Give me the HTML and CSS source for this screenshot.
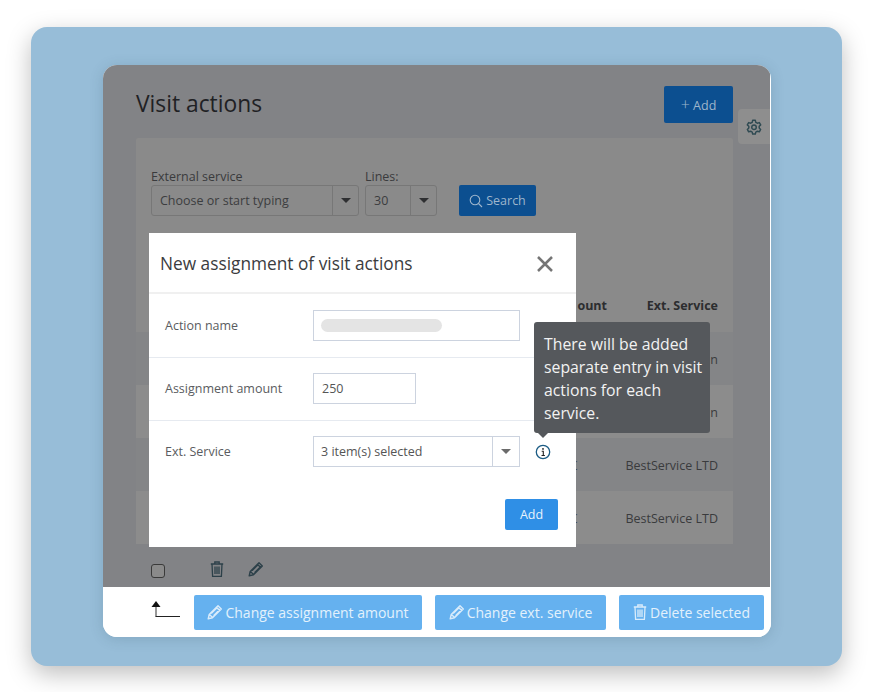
FILE: index.html
```html
<!DOCTYPE html>
<html lang="en">
<head>
<meta charset="utf-8">
<title>Visit actions</title>
<link rel="stylesheet" href="styles.css">
</head>
<body>
<div class="card">
  <div class="window">
    <div class="page">
      <div class="head">
        <h1 class="title">Visit actions</h1>
        <button class="btn-dim add-top"><span class="plus">+</span> Add</button>
      </div>
      <div class="gear">
        <svg width="16" height="16" viewBox="0 0 24 24" fill="none" stroke="#2f4a52" stroke-width="2.200" stroke-linejoin="round"><path d="M10 2h4l.7 3 2.300 1.300 3-.9 2 3.500-2.200 2.100v2.600L22 15.700l-2 3.500-3-.9-2.300 1.300L14 22.600h-4l-.7-3L7 18.300l-3 .9-2-3.500 2.200-2.100V11L2 8.900l2-3.500 3 .9L9.300 5z"/><circle cx="12" cy="12.300" r="3.400"/></svg>
      </div>
      <div class="panel">
        <div class="filters">
          <div class="field">
            <label class="flabel">External service</label>
            <div class="fselect wide"><span class="ftext">Choose or start typing</span><span class="fcaret"><i class="caret dim"></i></span></div>
          </div>
          <div class="field">
            <label class="flabel">Lines:</label>
            <div class="fselect narrow"><span class="ftext">30</span><span class="fcaret"><i class="caret dim"></i></span></div>
          </div>
          <button class="btn-dim search">
            <svg width="14" height="14" viewBox="0 0 14 14" fill="none" stroke="#9fb6cc" stroke-width="1.100"><circle cx="6" cy="6" r="4.800"/><path d="M9.500 9.500L13 13"/></svg>
            Search
          </button>
        </div>
        <div class="thead"><span class="th-amount">ount</span><span class="th-service">Ext. Service</span></div>
        <div class="row"><span class="cell">n</span></div>
        <div class="row stripe"><span class="cell">n</span></div>
        <div class="row"><span class="amt">€</span><span class="cell">BestService LTD</span></div>
        <div class="row stripe"><span class="amt">€</span><span class="cell">BestService LTD</span></div>
      </div>
      <div class="tools">
        <span class="check"></span>
        <svg class="trash" width="14" height="16" viewBox="0 0 14 16" fill="none" stroke="#2c4049" stroke-width="1.300"><path d="M.8 3h12.400M4.800 3V1h4.400v2M2 3l.6 12.300h8.800L12 3M5 5.500v7.500M7 5.500v7.500M9 5.500v7.500"/></svg>
        <svg class="pen" width="16" height="16" viewBox="0 0 16 16" fill="none" stroke="#2c4049" stroke-width="1.400" stroke-linejoin="round"><path d="M1.200 14.800l1-4.300L11 1.700l3.300 3.300-8.800 8.800zM2.500 10.500l3 3M9.400 3.300l3.300 3.300M4.200 9.500l6.500-6.500M6.500 11.800L13 5.300"/></svg>
      </div>
    </div>
    <div class="actions">
      <svg class="corner" width="30" height="16" viewBox="0 0 30 16" fill="none"><path d="M5 15.500V4" stroke="#555" stroke-width="1.200"/><path d="M4.500 15.500H29" stroke="#222" stroke-width="1"/><path d="M.5 6L5 0l4.500 6z" fill="#111"/></svg>
      <button class="btn-light w1">
        <svg width="16" height="16" viewBox="0 0 16 16" fill="none" stroke="#d9ecfb" stroke-width="1.400" stroke-linejoin="round"><path d="M1.200 14.800l1-4.300L11 1.700l3.300 3.300-8.800 8.800zM2.500 10.500l3 3M9.400 3.300l3.300 3.300M4.200 9.500l6.500-6.500M6.500 11.800L13 5.300"/></svg>
        Change assignment amount
      </button>
      <button class="btn-light w2">
        <svg width="16" height="16" viewBox="0 0 16 16" fill="none" stroke="#d9ecfb" stroke-width="1.400" stroke-linejoin="round"><path d="M1.200 14.800l1-4.300L11 1.700l3.300 3.300-8.800 8.800zM2.500 10.500l3 3M9.400 3.300l3.300 3.300M4.200 9.500l6.500-6.500M6.500 11.800L13 5.300"/></svg>
        Change ext. service
      </button>
      <button class="btn-light w3">
        <svg width="14" height="16" viewBox="0 0 14 16" fill="none" stroke="#d9ecfb" stroke-width="1.300"><path d="M.8 3h12.400M4.800 3V1h4.400v2M2 3l.6 12.300h8.800L12 3M5 5.500v7.500M7 5.500v7.500M9 5.500v7.500"/></svg>
        Delete selected
      </button>
    </div>
    <div class="modal">
      <div class="modal-head">
        <span class="modal-title">New assignment of visit actions</span>
        <svg class="close" width="18" height="18" viewBox="0 0 18 18" stroke="#757575" stroke-width="2.500"><path d="M2 2l14 14M16 2L2 16"/></svg>
      </div>
      <div class="mrow">
        <span class="mlabel">Action name</span>
        <div class="minput long"><span class="skeleton"></span></div>
      </div>
      <div class="mrow">
        <span class="mlabel">Assignment amount</span>
        <div class="minput short">250</div>
      </div>
      <div class="mrow last">
        <span class="mlabel">Ext. Service</span>
        <div class="minput long sel"><span class="seltext">3 item(s) selected</span><span class="selcaret"><i class="caret"></i></span></div>
        <svg class="info" width="16" height="16" viewBox="0 0 16 16" fill="none"><circle cx="8" cy="8" r="6.700" stroke="#1c5c84" stroke-width="1.300"/><path d="M6.700 7.200H8.300V11.500M6.500 11.500h3.400" stroke="#222" stroke-width="1.100"/><circle cx="8" cy="4.900" r=".9" fill="#222"/></svg>
      </div>
      <div class="mfoot"><button class="madd">Add</button></div>
    </div>
    <div class="tooltip">There will be added separate entry in visit actions for each service.</div>
  </div>
</div>
</body>
</html>
```
FILE: styles.css
```css
* { box-sizing: border-box; }
html, body { margin: 0; padding: 0; background: #fff; }
body { width: 873px; height: 692px; padding: 27px 31px 26px; font-family: "Open Sans", sans-serif; overflow: hidden; }
button { font-family: inherit; border: 0; cursor: pointer; }

.card {
  width: 811px; height: 639px; background: #97bdd8; border-radius: 16px;
  padding: 38px 71px 29px 72px;
  box-shadow: 0 8px 24px rgba(0,0,0,.26);
}
.window {
  position: relative; width: 668px; height: 572px; background: #fff; border-radius: 14px;
  overflow: hidden; display: flex; flex-direction: column;
  box-shadow: 0 2px 14px rgba(40,70,90,.18);
}
.page { position: relative; height: 522px; background: #828386; padding: 0 37px 0 33px; margin-right: 1px; overflow: hidden; }
.head { display: flex; justify-content: space-between; align-items: flex-start; height: 73px; padding-top: 21px; }
.title { margin: 0; font-size: 22.800px; font-weight: 400; line-height: 35px; color: #1f2124; }
.btn-dim { background: #0c4f90; color: #9fb6cc; border-radius: 2px; font-size: 12.500px; }
.add-top { width: 69px; height: 37px; padding: 0; }
.plus { font-size: 16px; font-weight: 300; line-height: 1; }
.gear {
  position: absolute; right: 0; top: 44px; width: 32px; height: 35px; background: #8e8e8e;
  border-radius: 4px 0 0 4px; display: flex; align-items: center; justify-content: center;
}
.panel { background: #8a8a8a; height: 406px; border-radius: 2px; }
.filters { display: flex; align-items: flex-end; gap: 6px; padding: 28px 0 0 15px; height: 78px; }
.field { display: flex; flex-direction: column; }
.flabel { font-size: 12.500px; line-height: 17px; color: #3a3b3d; height: 17px; }
.fselect { display: flex; height: 31px; border: 1px solid #777; border-radius: 3px; color: #3c3d3f; font-size: 12.500px; }
.wide { width: 208px; }
.narrow { width: 72px; }
.ftext { flex: 1; padding-left: 8px; line-height: 29px; }
.fcaret { width: 26px; border-left: 1px solid #777; display: flex; align-items: center; justify-content: center; }
.caret { width: 0; height: 0; border-left: 5px solid transparent; border-right: 5px solid transparent; border-top: 5px solid #6b6b6b; }
.caret.dim { border-top-color: #2e2f31; }
.search { width: 77px; height: 31px; margin-left: 16px; padding: 0; display: flex; align-items: center; justify-content: center; gap: 3px; }

.thead { height: 116px; position: relative; font-size: 12.500px; font-weight: 700; color: #2c2d2f; }
.th-amount { position: absolute; right: 126px; top: 81px; white-space: nowrap; }
.th-service { position: absolute; right: 15px; top: 81px; white-space: nowrap; }
.row { height: 53px; padding: 2px 15px 0 0; display: flex; align-items: center; justify-content: flex-end; font-size: 12.500px; color: #3a3b3d; background: #848587; }
.stripe { background: #8c8c8c; }
.amt { margin-right: 48px; }
.tools { height: 43px; padding: 10px 0 0 15px; display: flex; align-items: center; }
.check { width: 14px; height: 14px; border: 1.500px solid #3a3a3a; border-radius: 3px; background: #8a8a8a; margin-right: 45px; }
.trash { margin: 0 24px 3px 0; }
.pen { margin-bottom: 3px; }
.actions { height: 50px; display: flex; align-items: center; padding-left: 48px; background: #fff; }
.corner { margin: 0 13px 6px 0; }
.btn-light {
  height: 35px; background: #65b1ef; color: #e3f1fc; border-radius: 2px; font-size: 14px; padding: 0;
  display: flex; align-items: center; justify-content: center; gap: 2px; margin-right: 13px; white-space: nowrap;
}
.w1 { width: 228px; }
.w2 { width: 171px; }
.w3 { width: 145px; margin-right: 0; gap: 3px; }

.modal {
  position: absolute; left: 46px; top: 168px; width: 427px; height: 314px; background: #fff;
  display: flex; flex-direction: column;
}
.modal-head { height: 61px; margin-bottom: 1px; padding: 2px 22px 0 11px; display: flex; align-items: center; justify-content: space-between; border-bottom: 2px solid #f0f0f0; }
.modal-title { font-size: 17.300px; color: #3b3c3e; }
.mrow { height: 63px; padding: 0 0 1px 16px; display: flex; align-items: center; border-bottom: 1px solid #e6eaf0; position: relative; font-size: 12.500px; color: #5a5c60; }
.mrow.last { border-bottom: 0; padding-bottom: 2px; }
.mlabel { width: 148px; }
.minput { height: 31px; border: 1px solid #ccd3df; color: #555; display: flex; align-items: center; }
.long { width: 207px; padding-left: 7px; }
.short { width: 103px; padding-left: 8px; }
.skeleton { width: 121px; height: 13px; border-radius: 7px; background: #e4e4e4; }
.sel { justify-content: space-between; padding-left: 7px; }
.selcaret { width: 27px; height: 100%; border-left: 1px solid #ccd3df; display: flex; align-items: center; justify-content: center; }
.info { margin-left: 15px; }
.mfoot { display: flex; justify-content: flex-end; padding: 15px 18px 0 0; }
.madd { width: 53px; height: 31px; background: #2f8fe6; color: #e8f3fc; border-radius: 2px; font-size: 12.500px; padding: 0; }

.tooltip {
  position: absolute; left: 431px; top: 257px; width: 176px; height: 111px; background: #55585c;
  border-radius: 3px; color: #f2f2f2; font-size: 15.800px; line-height: 23px; padding: 11px 4px 0 10px;
}
.tooltip::after {
  content: ""; position: absolute; left: 4px; bottom: -5px; border-left: 5px solid transparent;
  border-right: 5px solid transparent; border-top: 5px solid #55585c;
}
```
